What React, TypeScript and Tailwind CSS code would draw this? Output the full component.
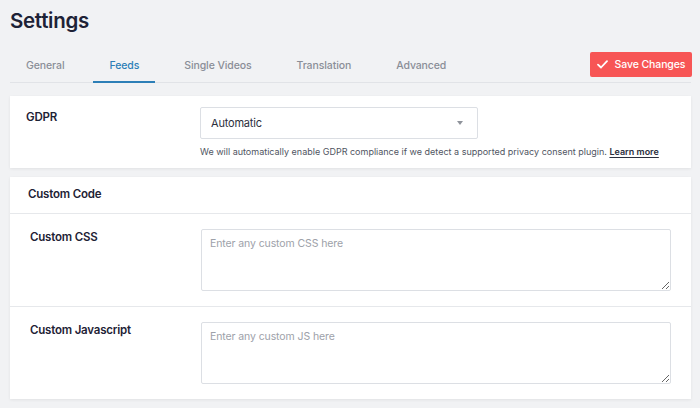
import React, { useState } from 'react';

const tabs = ['General', 'Feeds', 'Single Videos', 'Translation', 'Advanced'];

const CheckIcon = () => (
    <svg width="11" height="9" viewBox="0 0 11 9" fill="none">
        <path d="M1 4.6 L4 7.5 L10 1.2" stroke="white" strokeWidth="1.8" strokeLinecap="round" strokeLinejoin="round" />
    </svg>
);

const CodeRow = ({ label, placeholder, last }: { label: string; placeholder: string; last?: boolean }) => (
    <div className={'flex pl-[20px] pr-[20px] pt-[15px] pb-[15px] ' + (last ? '' : 'border-b border-[#e6e8eb]')}>
        <div className="w-[171px] shrink-0 text-[11.5px] leading-[16px] tracking-[-0.2px] font-semibold text-[#1e2235]">{label}</div>
        <textarea
            placeholder={placeholder}
            className="flex-1 h-[62px] border border-[#dcdfe4] rounded-[2px] px-2 pt-[6px] text-[10.5px] leading-[16px] tracking-[-0.1px] text-[#1e2235] placeholder:text-[#9da1a9] outline-none"
        />
    </div>
);

export default function App() {
    const [active, setActive] = useState('Feeds');

    return (
        <div className="min-h-screen bg-[#f1f2f4] pl-[10px] pr-[9px] pt-[6px] pb-4 font-['Inter',sans-serif]">
            <h1 className="text-[20.5px] leading-[30px] tracking-[-0.3px] font-semibold text-[#1d2236]">Settings</h1>

            <div className="mt-[11px] h-[36px] flex items-center justify-between border-b border-[#e1e3e7]">
                <div className="flex h-full gap-[13px]">
                    {tabs.map(t => (
                        <button
                            key={t}
                            onClick={() => setActive(t)}
                            className={
                                'h-[36px] px-4 pt-[3px] flex items-center text-[10.5px] tracking-[-0.1px] font-medium border-b-2 ' +
                                (active === t ? 'text-[#2d7fb7] border-[#2d7fb7]' : 'text-[#8a8e97] border-transparent')
                            }
                        >
                            {t}
                        </button>
                    ))}
                </div>
                <button className="h-[25px] w-[102px] mr-[-1px] flex items-center justify-center gap-[7px] rounded-[2px] bg-[#f75555] text-white text-[10.5px] tracking-[-0.1px] font-medium">
                    <CheckIcon />
                    Save Changes
                </button>
            </div>

            <div className="mt-[13px] bg-white shadow-[0_1px_3px_rgba(0,0,0,0.07)] pl-[16px] pt-[11px] pb-[9px] flex">
                <div className="w-[174px] shrink-0 pt-[2px] text-[11.5px] leading-[16px] tracking-[-0.2px] font-semibold text-[#1e2235]">GDPR</div>
                <div>
                    <div className="w-[278px] h-[32px] border border-[#dcdfe4] rounded-[2px] flex items-center justify-between pl-[10px] pr-[14px] text-[11px] tracking-[-0.2px] text-[#2b2f3d]">
                        <span>Automatic</span>
                        <span className="w-0 h-0 border-l-[3.5px] border-r-[3.5px] border-t-[4px] border-l-transparent border-r-transparent border-t-[#8f939b]" />
                    </div>
                    <p className="mt-[6px] text-[9px] leading-[14px] text-[#505562] whitespace-nowrap">
                        We will automatically enable GDPR compliance if we detect a supported privacy consent plugin.{' '}
                        <a className="font-semibold text-[#2b2f3d] underline underline-offset-2">Learn more</a>
                    </p>
                </div>
            </div>

            <div className="mt-[9px] bg-white shadow-[0_1px_3px_rgba(0,0,0,0.07)]">
                <div className="h-[37px] flex items-center pl-[18px] border-b border-[#e6e8eb] text-[11.5px] tracking-[-0.2px] font-semibold text-[#1e2235]">
                    Custom Code
                </div>
                <CodeRow label="Custom CSS" placeholder="Enter any custom CSS here" />
                <CodeRow label="Custom Javascript" placeholder="Enter any custom JS here" last />
            </div>
        </div>
    );
}
